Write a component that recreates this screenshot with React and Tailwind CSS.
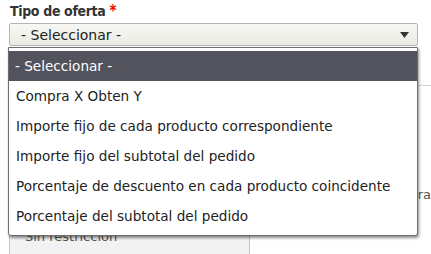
const OPTIONS = [
  '- Seleccionar -',
  'Compra X Obten Y',
  'Importe fijo de cada producto correspondiente',
  'Importe fijo del subtotal del pedido',
  'Porcentaje de descuento en cada producto coincidente',
  'Porcentaje del subtotal del pedido',
];

function Caret() {
  return (
    <svg width="9" height="6" viewBox="0 0 9 6" className="shrink-0">
      <path d="M0 0h9L4.5 6z" fill="#333" />
    </svg>
  );
}

export default function App() {
  return (
    <div className="relative h-[254px] w-[431px] overflow-hidden bg-white font-['DejaVu_Sans',sans-serif] text-[#222]">
      <div className="pl-[10px] pt-[1px] font-['DejaVu_Sans_Condensed','DejaVu_Sans',sans-serif] text-[14px] font-bold leading-[20px] tracking-[-0.35px] text-[#333]">
        Tipo de oferta <span className="text-[15px] text-[#e00]">*</span>
      </div>

      <div className="ml-[9px] mt-[2px] flex h-[23px] w-[409px] items-center justify-between rounded-[2px] border border-[#b4b4b0] bg-gradient-to-b from-[#f8f8f4] to-[#ebeae3] pl-[11px] pr-[8px] text-[14px] leading-[20px] text-[#222]">
        <span>- Seleccionar -</span>
        <Caret />
      </div>

      {/* what sits behind the open list */}
      <div className="flex">
        <div className="ml-[9px] mt-[181px] h-[40px] w-[242px] border border-r border-[#c8c8c8] bg-[#f2f2f2] pl-[15px] text-[13px] leading-[18px] text-[#555]">
          Sin restricción
        </div>
        <div className="mt-[39px] flex-1 border-t border-[#d4d4d4]">
          <p className="mt-[100px] pl-[130px] text-[13px] leading-[18px] text-[#555]">Compra</p>
        </div>
      </div>

      <ul className="absolute left-[8px] top-[47px] w-[410px] rounded-b-[3px] border border-[#6e6e6e] bg-white pb-[4px] pt-[3px] text-[13.6px] shadow-[1px_2px_3px_rgba(0,0,0,0.45)]">
        {OPTIONS.map((o, i) => (
          <li
            key={o}
            className={
              i === 0
                ? 'flex h-[30px] items-center bg-[#53535e] pl-[6px] text-white'
                : 'flex h-[30px] items-center pl-[7px] text-[#222]'
            }
          >
            {o}
          </li>
        ))}
      </ul>
    </div>
  );
}
